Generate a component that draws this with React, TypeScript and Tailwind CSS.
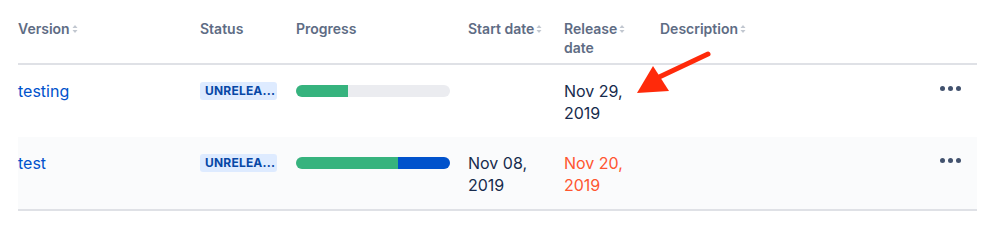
import React from "react";

type Row = {
  name: string;
  done: number;
  inProgress: number;
  start?: string[];
  release: string[];
  overdue?: boolean;
  shaded?: boolean;
};

const rows: Row[] = [
  { name: "testing", done: 52, inProgress: 0, release: ["Nov 29,", "2019"] },
  {
    name: "test",
    done: 102,
    inProgress: 52,
    start: ["Nov 08,", "2019"],
    release: ["Nov 20,", "2019"],
    overdue: true,
    shaded: true,
  },
];

const cols = "grid grid-cols-[182px_96px_172px_96px_96px_1fr_auto]";

function SortIcon() {
  return (
    <svg width="6" height="10" viewBox="0 0 6 10" className="ml-[2px] mt-[5px] shrink-0">
      <path d="M3 1 L5.5 4 L0.5 4 Z" fill="#c1c7d0" />
      <path d="M3 9 L5.5 6 L0.5 6 Z" fill="#c1c7d0" />
    </svg>
  );
}

function Head({ label, sort }: { label: React.ReactNode; sort?: boolean }) {
  return (
    <div className="flex items-start text-[14px] leading-[19px] font-semibold text-[#5e6c84]">
      <span>{label}</span>
      {sort && <SortIcon />}
    </div>
  );
}

function Progress({ done, inProgress }: { done: number; inProgress: number }) {
  return (
    <div className="flex h-[22px] items-center">
      <div className="flex h-[12px] w-[154px] overflow-hidden rounded-full bg-[#ebecf0]">
        <div className="h-full bg-[#36b37e]" style={{ width: done }} />
        <div className="h-full bg-[#0052cc]" style={{ width: inProgress }} />
      </div>
    </div>
  );
}

export default function App() {
  return (
    <div className="relative h-[244px] w-[999px] bg-white" style={{ fontFamily: "Inter, 'Noto Sans', sans-serif" }}>
      <div className="ml-[18px] w-[959px]">
        <div className={`${cols} border-b-2 border-[#dfe1e6] pt-[19px] pb-[6px]`}>
          <Head label="Version" sort />
          <Head label="Status" />
          <Head label="Progress" />
          <Head label="Start date" sort />
          <Head label={<>Release<br />date</>} sort />
          <Head label="Description" sort />
          <div />
        </div>

        {rows.map((r) => (
          <div
            key={r.name}
            className={`${cols} h-[72px] pt-[15px] text-[16px] leading-[22px] text-[#172b4d] ${
              r.shaded ? "h-[74px] border-b-2 border-[#dfe1e6] bg-[#fafbfc] pt-[14px]" : ""
            }`}
          >
            <div className="text-[#0052cc]">{r.name}</div>
            <div className="flex h-[22px] items-center">
              <span className="w-[77px] overflow-hidden whitespace-nowrap rounded-[3px] bg-[#deebff] px-[5px] text-[12px] leading-[18px] font-bold tracking-[0.2px] text-[#0747a6]">
                UNRELEA...
              </span>
            </div>
            <Progress done={r.done} inProgress={r.inProgress} />
            <div>
              {r.start?.map((l) => (
                <div key={l}>{l}</div>
              ))}
            </div>
            <div className={r.overdue ? "text-[#ff5630]" : ""}>
              {r.release.map((l) => (
                <div key={l}>{l}</div>
              ))}
            </div>
            <div />
            <div className="flex h-[16px] items-center gap-[3px] pr-[16px]">
              <span className="h-[5px] w-[5px] rounded-full bg-[#42526e]" />
              <span className="h-[5px] w-[5px] rounded-full bg-[#42526e]" />
              <span className="h-[5px] w-[5px] rounded-full bg-[#42526e]" />
            </div>
          </div>
        ))}
      </div>

      {/* red arrow annotation */}
      <svg className="absolute left-0 top-0" width="999" height="244">
        <line x1="708" y1="54" x2="655" y2="79" stroke="#ff2a0a" strokeWidth="5" strokeLinecap="round" />
        <polygon points="637,93 653,66 669,91" fill="#ff2a0a" />
      </svg>
    </div>
  );
}
